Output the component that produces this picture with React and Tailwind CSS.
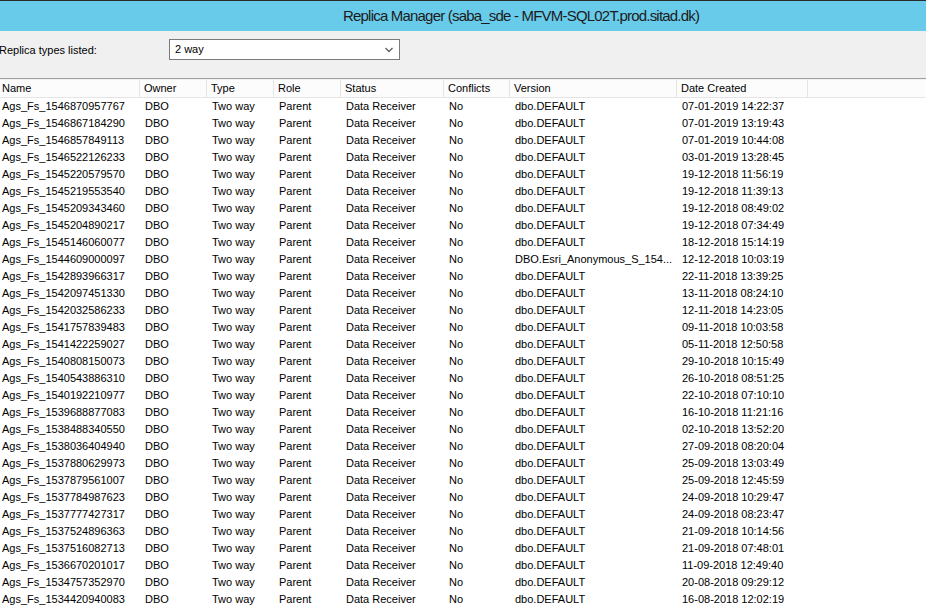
import React from "react";

const rows = [
  ["Ags_Fs_1546870957767", "dbo.DEFAULT", "07-01-2019 14:22:37"],
  ["Ags_Fs_1546867184290", "dbo.DEFAULT", "07-01-2019 13:19:43"],
  ["Ags_Fs_1546857849113", "dbo.DEFAULT", "07-01-2019 10:44:08"],
  ["Ags_Fs_1546522126233", "dbo.DEFAULT", "03-01-2019 13:28:45"],
  ["Ags_Fs_1545220579570", "dbo.DEFAULT", "19-12-2018 11:56:19"],
  ["Ags_Fs_1545219553540", "dbo.DEFAULT", "19-12-2018 11:39:13"],
  ["Ags_Fs_1545209343460", "dbo.DEFAULT", "19-12-2018 08:49:02"],
  ["Ags_Fs_1545204890217", "dbo.DEFAULT", "19-12-2018 07:34:49"],
  ["Ags_Fs_1545146060077", "dbo.DEFAULT", "18-12-2018 15:14:19"],
  ["Ags_Fs_1544609000097", "DBO.Esri_Anonymous_S_154...", "12-12-2018 10:03:19"],
  ["Ags_Fs_1542893966317", "dbo.DEFAULT", "22-11-2018 13:39:25"],
  ["Ags_Fs_1542097451330", "dbo.DEFAULT", "13-11-2018 08:24:10"],
  ["Ags_Fs_1542032586233", "dbo.DEFAULT", "12-11-2018 14:23:05"],
  ["Ags_Fs_1541757839483", "dbo.DEFAULT", "09-11-2018 10:03:58"],
  ["Ags_Fs_1541422259027", "dbo.DEFAULT", "05-11-2018 12:50:58"],
  ["Ags_Fs_1540808150073", "dbo.DEFAULT", "29-10-2018 10:15:49"],
  ["Ags_Fs_1540543886310", "dbo.DEFAULT", "26-10-2018 08:51:25"],
  ["Ags_Fs_1540192210977", "dbo.DEFAULT", "22-10-2018 07:10:10"],
  ["Ags_Fs_1539688877083", "dbo.DEFAULT", "16-10-2018 11:21:16"],
  ["Ags_Fs_1538488340550", "dbo.DEFAULT", "02-10-2018 13:52:20"],
  ["Ags_Fs_1538036404940", "dbo.DEFAULT", "27-09-2018 08:20:04"],
  ["Ags_Fs_1537880629973", "dbo.DEFAULT", "25-09-2018 13:03:49"],
  ["Ags_Fs_1537879561007", "dbo.DEFAULT", "25-09-2018 12:45:59"],
  ["Ags_Fs_1537784987623", "dbo.DEFAULT", "24-09-2018 10:29:47"],
  ["Ags_Fs_1537777427317", "dbo.DEFAULT", "24-09-2018 08:23:47"],
  ["Ags_Fs_1537524896363", "dbo.DEFAULT", "21-09-2018 10:14:56"],
  ["Ags_Fs_1537516082713", "dbo.DEFAULT", "21-09-2018 07:48:01"],
  ["Ags_Fs_1536670201017", "dbo.DEFAULT", "11-09-2018 12:49:40"],
  ["Ags_Fs_1534757352970", "dbo.DEFAULT", "20-08-2018 09:29:12"],
  ["Ags_Fs_1534420940083", "dbo.DEFAULT", "16-08-2018 12:02:19"],
];

const cols = "grid-cols-[140px_67px_67px_67px_103px_66px_167px_131px_1fr]";

const headers = ["Name", "Owner", "Type", "Role", "Status", "Conflicts", "Version", "Date Created", ""];

export default function App() {
  return (
    <div
      className="w-[926px] h-[611px] overflow-hidden bg-white text-[11px] text-black"
      style={{ fontFamily: '"Liberation Sans", Arial, sans-serif' }}
    >
      {/* Title bar */}
      <div className="h-[1px] bg-[#2b2b2b]" />
      <div className="h-[30px] bg-[#69cbea] flex items-center pl-[343px]">
        <span className="text-[15px] text-[#1c1c1c] tracking-[-0.8px] whitespace-nowrap">
          Replica Manager (saba_sde - MFVM-SQL02T.prod.sitad.dk)
        </span>
      </div>

      {/* Toolbar */}
      <div className="h-[47px] bg-[#f0f0f0] flex items-start">
        <div className="w-[170px] pt-[11px] -ml-[1px] whitespace-nowrap">Replica types listed:</div>
        <div className="mt-[8px] w-[231px] h-[21px] bg-white border border-[#7a7a7a] flex items-center justify-between pl-[5px] pr-[6px]">
          <span>2 way</span>
          <svg width="8" height="6" viewBox="0 0 8 6" className="mt-[1px]">
            <path d="M0.5 1 L4 4.5 L7.5 1" fill="none" stroke="#606060" strokeWidth="1.3" />
          </svg>
        </div>
      </div>

      {/* separator */}
      <div className="h-[1px] bg-[#a0a0a0]" />
      <div className="h-[1px] bg-[#f0f0f0]" />

      {/* header */}
      <div className={`grid ${cols} h-[18px] bg-[#fcfcfc] border-b border-[#e5e5e5]`}>
        {headers.map((h, i) => (
          <div
            key={i}
            className={`flex items-center whitespace-nowrap ${i === 0 ? "pl-[2px]" : "pl-[4px]"} ${
              i < 8 ? "border-r border-[#e5e5e5]" : ""
            }`}
          >
            {h}
          </div>
        ))}
      </div>

      {/* rows */}
      <div>
        {rows.map((r, idx) => (
          <div key={idx} className={`grid ${cols} h-[17px]`}>
            <div className="pl-[2px] flex items-center whitespace-nowrap">{r[0]}</div>
            <div className="pl-[5px] flex items-center">DBO</div>
            <div className="pl-[5px] flex items-center whitespace-nowrap">Two way</div>
            <div className="pl-[5px] flex items-center">Parent</div>
            <div className="pl-[5px] flex items-center whitespace-nowrap">Data Receiver</div>
            <div className="pl-[5px] flex items-center">No</div>
            <div className="pl-[5px] flex items-center whitespace-nowrap overflow-hidden">{r[1]}</div>
            <div className="pl-[5px] flex items-center whitespace-nowrap">{r[2]}</div>
            <div />
          </div>
        ))}
      </div>
    </div>
  );
}
